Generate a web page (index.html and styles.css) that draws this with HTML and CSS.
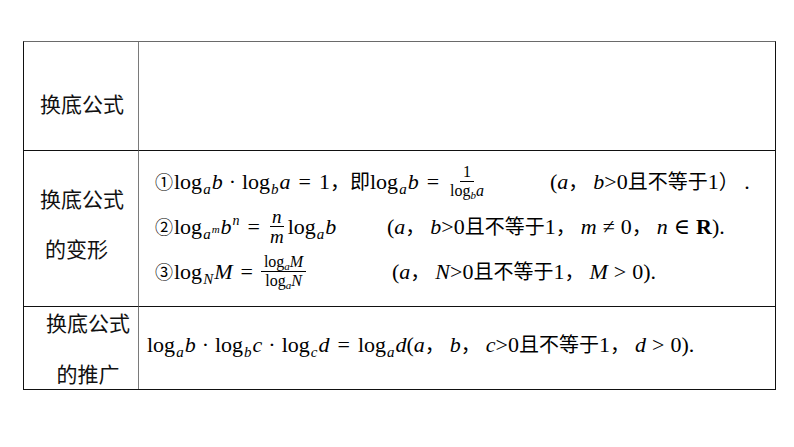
FILE: index.html
```html
<!DOCTYPE html>
<html lang="zh">
<head>
<meta charset="utf-8">
<title>换底公式</title>
<link rel="stylesheet" href="styles.css">
</head>
<body>
<div class="tbl">
  <div class="head r1"><span class="hl">换底公式</span></div>
  <div class="body r1"></div>

  <div class="head r2">
    <div class="hl">换底公式</div>
    <div class="hl ind">的变形</div>
  </div>
  <div class="body r2">
    <div class="line"><span class="f f1"><span class="cj circ">①</span>log<sub>a</sub><i>b</i><span class="op">·</span>log<sub>b</sub><i>a</i><span class="op eq">=</span>1<span class="cj">，即</span>log<sub>a</sub><i>b</i><span class="op eq">=</span><span class="frac"><span class="num">1</span><span class="den">log<sub>b</sub><i>a</i></span></span></span><span class="c">(<i>a</i><span class="cj cm">，</span><i>b</i>&gt;0<span class="cj">且不等于</span>1<span class="cj">）</span> .</span></div>
    <div class="line"><span class="f f2"><span class="cj circ">②</span>log<sub>a<sup>m</sup></sub><i>b</i><sup>n</sup><span class="op eq">=</span><span class="frac big"><span class="num"><i>n</i></span><span class="den"><i>m</i></span></span>log<sub>a</sub><i>b</i></span><span class="c">(<i>a</i><span class="cj cm">，</span><i>b</i>&gt;0<span class="cj">且不等于</span>1<span class="cj cm">，</span><i>m</i><span class="op">≠</span>0<span class="cj cm">，</span><i>n</i><span class="op">∈</span><b>R</b>).</span></div>
    <div class="line"><span class="f f3"><span class="cj circ">③</span>log<sub>N</sub><i>M</i><span class="op eq">=</span><span class="frac"><span class="num">log<sub>a</sub><i>M</i></span><span class="den">log<sub>a</sub><i>N</i></span></span></span><span class="c">(<i>a</i><span class="cj cm">，</span><i>N</i>&gt;0<span class="cj">且不等于</span>1<span class="cj cm">，</span><i>M</i><span class="op">&gt;</span>0).</span></div>
  </div>

  <div class="head r3">
    <div class="hl">换底公式</div>
    <div class="hl">的推广</div>
  </div>
  <div class="body r3">
    <div class="line">log<sub>a</sub><i>b</i><span class="op">·</span>log<sub>b</sub><i>c</i><span class="op">·</span>log<sub>c</sub><i>d</i><span class="op eq">=</span>log<sub>a</sub><i>d</i>(<i>a</i><span class="cj cm">，</span><i>b</i><span class="cj cm">，</span><i>c</i>&gt;0<span class="cj">且不等于</span>1<span class="cj cm">，</span><i>d</i><span class="op">&gt;</span>0).</div>
  </div>
</div>
</body>
</html>
```
FILE: styles.css
```css
html, body {
  margin: 0;
  padding: 0;
  background: #fff;
}
body {
  width: 794px;
  height: 447px;
  overflow: hidden;
  color: #000;
}
.tbl {
  margin: 41px 0 0 23px;
  width: 753px;
  box-sizing: border-box;
  display: grid;
  grid-template-columns: 115px 636px;
  grid-template-rows: 109px 156px 82px;
  border-top: 1px solid #6a6a6a;
  border-left: 1px solid #111;
  border-right: 1px solid #111;
  border-bottom: 1px solid #111;
}
.head {
  border-right: 1px solid #7a7a7a;
  font-family: "Noto Sans CJK SC", "Noto Sans", sans-serif;
  font-size: 21px;
  box-sizing: border-box;
  color: #111;
}
.r1, .r2 {
  border-bottom: 1px solid #111;
}
.head.r1 {
  display: flex;
  align-items: center;
  padding: 14px 0 0 16px;
}
.head.r2 {
  display: flex;
  flex-direction: column;
  justify-content: center;
  padding: 0 0 12px 16px;
}
.head.r2 .hl {
  height: 50px;
  line-height: 50px;
}
.head.r2 .ind {
  padding-left: 5px;
}
.head.r3 {
  display: flex;
  flex-direction: column;
  align-items: center;
  justify-content: center;
  padding: 0 0 0 14px;
}
.head.r3 .hl {
  height: 51px;
  line-height: 51px;
}
.body {
  font-family: "Liberation Serif", "DejaVu Serif", serif;
  font-size: 22px;
  box-sizing: border-box;
}
.body i {
  font-style: italic;
}
.cj {
  font-family: "Noto Sans CJK SC", sans-serif;
  font-size: 20px;
}
.cj.cm {
  margin-right: 5px;
}
.circ {
  font-size: 18px;
  margin-right: 1px;
}
.op {
  margin: 0 6px;
}
.op.eq {
  margin: 0 8px;
}
.body sub {
  font-size: 15px;
  font-style: italic;
  vertical-align: -5px;
  line-height: 0;
  margin: 0 1px;
}
.body sup {
  font-size: 14px;
  font-style: italic;
  vertical-align: 9px;
  line-height: 0;
  margin-left: 1px;
}
.body sub sup {
  font-size: 11px;
  vertical-align: 6px;
}
.body.r2 {
  display: flex;
  flex-direction: column;
  justify-content: center;
  padding: 0 0 6px 16px;
}
.line {
  height: 45px;
  line-height: 45px;
  white-space: nowrap;
}
.f {
  display: inline-block;
}
.f1 { width: 395px; }
.f2 { width: 232px; }
.f3 { width: 237px; }
.c {
  display: inline-block;
}
.frac {
  display: inline-flex;
  flex-direction: column;
  align-items: center;
  vertical-align: middle;
  font-size: 16px;
  line-height: 1.05;
  position: relative;
  top: -2px;
}
.frac .num {
  padding: 0 3px 1px;
  border-bottom: 1px solid #000;
}
.frac .den {
  padding: 1px 3px 0;
}
.frac sub {
  font-size: 11px;
  vertical-align: -3px;
  margin: 0;
}
.frac.big {
  font-size: 19px;
  margin-right: 2px;
}
.frac.big .num, .frac.big .den {
  padding: 0 2px;
}
.body.r3 {
  display: flex;
  align-items: center;
  padding: 0 0 10px 8px;
}
```
